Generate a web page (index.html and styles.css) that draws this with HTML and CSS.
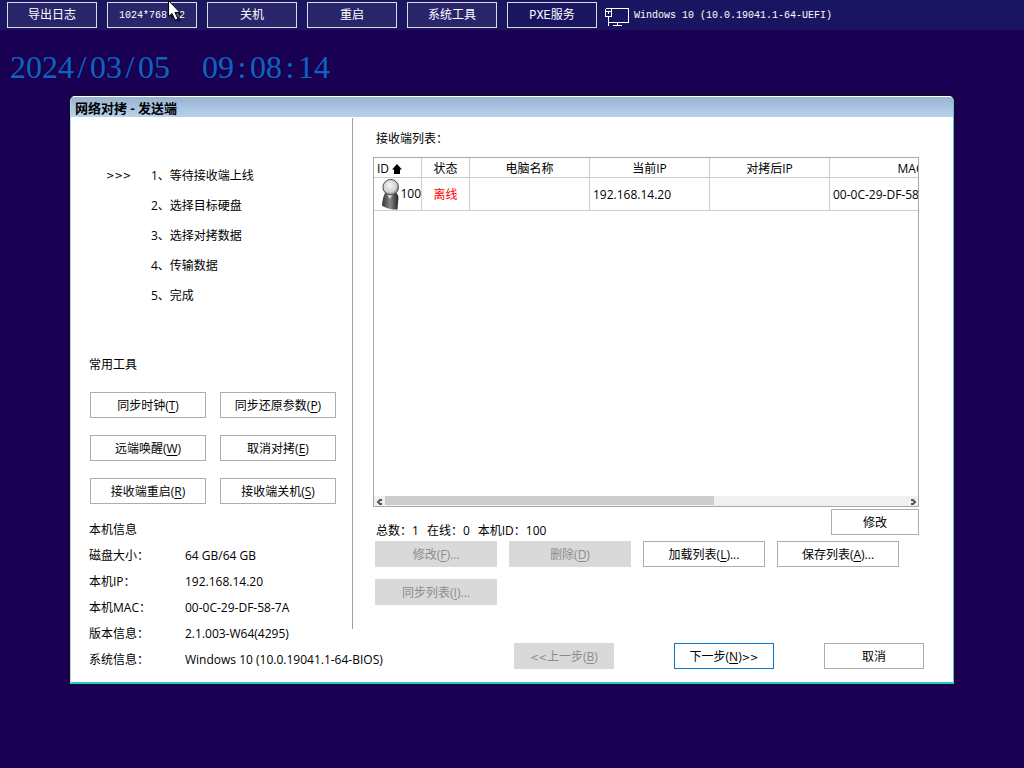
FILE: index.html
```html
<!DOCTYPE html>
<html lang="zh-CN">
<head>
<meta charset="utf-8">
<title>网络对拷 - 发送端</title>
<link rel="stylesheet" href="styles.css">
</head>
<body>
<header class="topbar">
  <button class="top-btn">导出日志</button>
  <button class="top-btn">1024*768*32
    <svg class="cursor" width="16" height="24" viewBox="0 0 16 24" aria-hidden="true">
      <path class="cursor-shadow" d="M3 3V18L7 15L10 21L13 20L10 14H14Z"/>
      <path class="cursor-arrow" d="M.5 -.5V15.500L4 12.500L7 19L10 18L7 11.500H12Z"/>
    </svg>
  </button>
  <button class="top-btn">关机</button>
  <button class="top-btn">重启</button>
  <button class="top-btn">系统工具</button>
  <button class="top-btn dark">PXE服务</button>
  <div class="os">
    <svg width="24" height="18" viewBox="0 0 24 18" fill="none" stroke="#fff" shape-rendering="crispEdges" aria-hidden="true">
      <path d="M.5 .5H23.500V14.500H3.500M.5 .5V8.500H6.500V.5M3.500 9V18M1 3.500H6M3.500 3V6M12.500 15V17M8 17.500H17"/>
    </svg>
    <span>Windows 10 (10.0.19041.1-64-UEFI)</span>
  </div>
</header>

<div class="clock"><span class="date">2024<span class="sep">/</span>03<span class="sep">/</span>05</span> <span>09<span class="sep">:</span>08<span class="sep">:</span>14</span></div>

<main class="window">
  <h1 class="title">网络对拷 - 发送端</h1>
  <div class="content">
    <aside class="side">
      <ol class="steps">
        <li><span class="mark">&gt;&gt;&gt;</span><span>1、等待接收端上线</span></li>
        <li><span class="mark"></span><span>2、选择目标硬盘</span></li>
        <li><span class="mark"></span><span>3、选择对拷数据</span></li>
        <li><span class="mark"></span><span>4、传输数据</span></li>
        <li><span class="mark"></span><span>5、完成</span></li>
      </ol>
      <h2 class="heading">常用工具</h2>
      <div class="tools">
        <button class="btn">同步时钟(<u>T</u>)</button>
        <button class="btn">同步还原参数(<u>P</u>)</button>
        <button class="btn">远端唤醒(<u>W</u>)</button>
        <button class="btn">取消对拷(<u>E</u>)</button>
        <button class="btn">接收端重启(<u>R</u>)</button>
        <button class="btn">接收端关机(<u>S</u>)</button>
      </div>
      <h2 class="heading">本机信息</h2>
      <dl class="info">
        <dt>磁盘大小：</dt><dd>64 GB/64 GB</dd>
        <dt>本机IP：</dt><dd>192.168.14.20</dd>
        <dt>本机MAC：</dt><dd>00-0C-29-DF-58-7A</dd>
        <dt>版本信息：</dt><dd>2.1.003-W64(4295)</dd>
        <dt>系统信息：</dt><dd>Windows 10 (10.0.19041.1-64-BIOS)</dd>
      </dl>
    </aside>
    <div class="divider"></div>
    <section class="panel">
      <h2 class="heading list-title">接收端列表：</h2>
      <div class="list">
        <div class="list-view">
          <table class="grid">
            <colgroup><col class="c-id"><col class="c-state"><col class="c-wide"><col class="c-wide"><col class="c-wide"><col class="c-mac"></colgroup>
            <thead>
              <tr>
                <th class="first">ID <svg width="10" height="10" viewBox="0 0 10 10" aria-hidden="true"><path d="M5 0L10 5.500H8V10H2V5.500H0Z"/></svg></th>
                <th>状态</th><th>电脑名称</th><th>当前IP</th><th>对拷后IP</th><th>MAC</th>
              </tr>
            </thead>
            <tbody>
              <tr>
                <td class="id-cell"><div class="id">
                  <svg width="20" height="32" viewBox="0 0 20 32" aria-hidden="true">
                    <defs>
                      <radialGradient id="head" cx=".45" cy=".4" r=".6"><stop offset="0" stop-color="#f6f6f6"/><stop offset=".7" stop-color="#d0d0d0"/><stop offset="1" stop-color="#777"/></radialGradient>
                      <linearGradient id="coat"><stop offset="0" stop-color="#333"/><stop offset=".5" stop-color="#888"/><stop offset="1" stop-color="#222"/></linearGradient>
                    </defs>
                    <path d="M5 14Q2 17 1 28Q8 32 17 32L18 19Q17 15 14 14Z" fill="url(#coat)"/>
                    <path d="M6 16L9 21L13 16Z" fill="#ddd"/>
                    <circle cx="10" cy="9" r="8" fill="url(#head)" stroke="#444"/>
                  </svg><span>100</span></div></td>
                <td class="offline">离线</td><td></td><td>192.168.14.20</td><td></td><td>00-0C-29-DF-58-7A</td>
              </tr>
            </tbody>
          </table>
        </div>
        <div class="scroll">
          <svg width="11" height="10" viewBox="0 0 11 10" aria-hidden="true"><path d="M8 4H6L4 6L6 8H8"/></svg>
          <div class="track"><div class="thumb"></div></div>
          <svg width="11" height="10" viewBox="0 0 11 10" aria-hidden="true"><path d="M4 4H6L8 6L6 8H4"/></svg>
        </div>
      </div>
      <div class="summary">
        <span class="counts"><span>总数：1</span><span>在线：0</span><span>本机ID：100</span></span>
        <button class="btn edit">修改</button>
      </div>
      <div class="actions">
        <button class="btn" disabled>修改(<u>F</u>)...</button>
        <button class="btn" disabled>删除(<u>D</u>)</button>
        <button class="btn">加载列表(<u>L</u>)...</button>
        <button class="btn">保存列表(<u>A</u>)...</button>
        <button class="btn" disabled>同步列表(<u>I</u>)...</button>
      </div>
      <footer class="wizard">
        <button class="btn" disabled><span class="arrows">&lt;&lt;</span>上一步(<u>B</u>)</button>
        <button class="btn primary">下一步(<u>N</u>)<span class="arrows">&gt;&gt;</span></button>
        <button class="btn cancel">取消</button>
      </footer>
    </section>
  </div>
</main>
</body>
</html>
```
FILE: styles.css
```css
* { box-sizing: border-box; }
body {
  margin: 0;
  min-height: 100vh;
  background: #1a0052;
  color: #000;
  font: 12px/18px "Open Sans", "Noto Sans CJK SC", sans-serif;
}
button { font: inherit; color: inherit; margin: 0; padding: 2px 0 0; }
h1, h2, ol, dl, dd { margin: 0; padding: 0; }

.topbar {
  display: flex;
  align-items: center;
  gap: 10px;
  height: 30px;
  padding: 0 7px;
  background: #1a1560;
  color: #fff;
  font: 12px/18px "Liberation Mono", "Noto Sans CJK SC", monospace;
}
.top-btn {
  position: relative;
  width: 90px;
  height: 26px;
  border: 1px solid #dcdcdc;
  background: #29256b;
  font-size: 12px;
}
.top-btn.dark { background: #1a1560; }
.top-btn:nth-child(2), .os { font-size: 10px; }
.cursor { position: absolute; left: 60px; top: -2px; }
.cursor-arrow { fill: #fff; stroke: #000; }
.cursor-shadow { fill: #000; opacity: .5; }
.os { display: flex; align-items: center; gap: 5px; margin-left: -2px; padding-top: 2px; white-space: nowrap; }
.os svg { margin-top: 2px; }

.clock {
  display: flex;
  gap: 32px;
  padding: 17px 10px 9px;
  color: #0a66be;
  font: 32px/40px "Liberation Serif", serif;
}
.sep { display: inline-block; width: 16px; text-align: center; }

.window {
  margin: 0 70px;
  border: 1px solid #b9d1ea;
  border-top-color: #fff;
  border-right-color: #6ab8e0;
  border-bottom: 2px solid #2cc4dc;
  border-radius: 5px 5px 0 0;
  background: #fff;
  box-shadow: 0 0 0 1px #111;
}
.title {
  height: 20px;
  padding-left: 4px;
  border-radius: 4px 4px 0 0;
  background: linear-gradient(#98b4d2, #b9d1ea);
  font-size: 13px;
  line-height: 22px;
}
.content { display: grid; grid-template-columns: 281px 1px minmax(0, 1fr); }
.divider { margin: 1px 0 53px; background: #a0a0a0; }
.heading { font-size: 12px; font-weight: 400; line-height: 18px; }

.side { padding: 44px 0 0 18px; }
.steps { list-style: none; margin-bottom: 45px; }
.steps li { display: flex; line-height: 30px; }
.mark { width: 62px; padding-left: 17px; }
.mark, .arrows { font-family: "DejaVu Sans", sans-serif; font-size: 10px; }
.tools {
  display: grid;
  grid-template-columns: 116px 116px;
  gap: 17px 14px;
  margin: 18px 0 17px 1px;
}
.btn { height: 26px; border: 1px solid #adadad; background: #fff; white-space: nowrap; }
.btn:disabled { border-color: #d9d9d9; background: #d9d9d9; color: #8c8c8c; }
.btn u { text-underline-offset: 2px; }
.info {
  display: grid;
  grid-template-columns: 96px 1fr;
  margin-top: 4px;
  line-height: 26px;
  white-space: nowrap;
}

.panel { padding: 13px 34px 13px 20px; }
.list-title { padding-left: 3px; }
.list {
  display: flex;
  flex-direction: column;
  height: 350px;
  margin-top: 9px;
  border: 1px solid #a9a9a9;
}
.list-view { flex: 1; overflow: hidden; }
.grid { width: 618px; table-layout: fixed; border-collapse: separate; border-spacing: 0; }
.c-id, .c-state { width: 48px; }
.c-wide { width: 120px; }
.c-mac { width: 162px; }
.grid th, .grid td {
  padding: 2px 3px 0;
  border: solid #cdcdcd;
  border-width: 0 1px 1px 0;
  font-weight: 400;
  white-space: nowrap;
  overflow: hidden;
}
.grid th { height: 20px; line-height: 17px; text-align: center; }
.grid th.first { text-align: left; }
.grid th svg { vertical-align: -1px; }
.grid td { height: 33px; }
.grid td.id-cell { padding: 0 0 0 7px; }
.id { display: flex; align-items: center; height: 32px; }
.grid td.offline { color: #f00; text-align: center; }
.scroll { display: flex; height: 10px; background: #f0f0f0; }
.scroll svg { fill: none; stroke: #555; stroke-width: 2; }
.track { flex: 1; }
.thumb { width: 63%; height: 9px; background: #cdcdcd; }

.summary { display: flex; justify-content: space-between; padding: 2px 0 0 3px; }
.counts { display: flex; gap: 8px; padding-top: 13px; }
.edit { width: 88px; }
.actions {
  display: grid;
  grid-template-columns: repeat(auto-fill, 122px);
  gap: 12px;
  margin: 1px 0 0 2px;
}
.wizard { display: flex; justify-content: flex-end; gap: 50px; margin: 38px -5px 0 0; }
.wizard .btn { width: 100px; }
.primary { margin-left: 10px; }
.btn.primary { border-color: #0078d7; }
```
